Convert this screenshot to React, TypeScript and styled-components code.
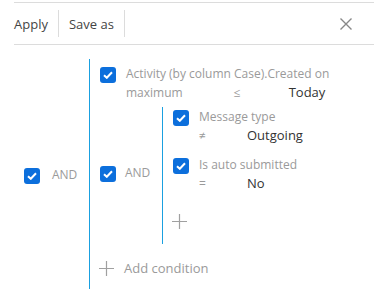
import styled, { createGlobalStyle } from 'styled-components';

const GlobalStyle = createGlobalStyle`
  body {
    margin: 0;
    background: #fff;
    font-family: 'Open Sans', 'Liberation Sans', sans-serif;
    font-size: 13px;
  }
`;

const Page = styled.div`
  padding: 2px 7px 0 14px;
`;

const Toolbar = styled.div`
  display: flex;
  align-items: center;
  height: 41px;
  border-top: 1px solid #dcdcdc;
  border-bottom: 1px solid #dcdcdc;
`;

const ToolButton = styled.button<{ $first?: boolean }>`
  height: 27px;
  padding: 0 10px 0 ${(p) => (p.$first ? '0' : '10px')};
  border: none;
  border-right: 1px solid #dcdcdc;
  background: transparent;
  font-family: inherit;
  font-size: 13px;
  color: #444;
  cursor: pointer;
`;

const CloseButton = styled.button`
  margin-left: auto;
  margin-right: 22px;
  padding: 0;
  border: none;
  background: transparent;
  display: flex;
  cursor: pointer;
`;

const Content = styled.div`
  padding-top: 14px;
`;

const Group = styled.div<{ $indent?: number }>`
  display: flex;
  align-items: center;
  padding-left: ${(p) => p.$indent || 0}px;
`;

const Connector = styled.div<{ $w: number; $gap: number; $lift?: number }>`
  width: ${(p) => p.$w}px;
  flex-shrink: 0;
  display: flex;
  align-items: center;
  gap: ${(p) => p.$gap}px;
  padding-bottom: ${(p) => p.$lift || 0}px;
`;

const AndLabel = styled.span`
  color: #9a9a9a;
  font-size: 12px;
`;

const Body = styled.div<{ $top: number; $bottom: number }>`
  display: flex;
  flex-direction: column;
  border-left: 1px solid #1aa0e0;
  padding: ${(p) => p.$top}px 0 ${(p) => p.$bottom}px 10px;
`;

const Condition = styled.div<{ $mb?: number }>`
  display: flex;
  align-items: flex-start;
  gap: 10px;
  margin-bottom: ${(p) => p.$mb || 0}px;
`;

const Box = styled.span`
  width: 16px;
  height: 16px;
  margin-top: 3px;
  flex-shrink: 0;
  border-radius: 3px;
  background: #0c6fdc;
  display: flex;
  align-items: center;
  justify-content: center;
`;

const Texts = styled.div`
  display: flex;
  flex-direction: column;
  line-height: 19px;
`;

const Title = styled.div`
  color: #9a9a9a;
  font-size: 12px;
  white-space: nowrap;
`;

const Detail = styled.div`
  display: flex;
  align-items: baseline;
  white-space: nowrap;
`;

const Prefix = styled.span`
  color: #9a9a9a;
  font-size: 12px;
  margin-right: 51px;
`;

const Operator = styled.span<{ $w: number }>`
  width: ${(p) => p.$w}px;
  color: #9a9a9a;
  font-size: 12px;
`;

const Value = styled.span`
  color: #333;
`;

const AddRow = styled.div<{ $h: number; $mt?: number }>`
  display: flex;
  align-items: center;
  gap: 10px;
  height: ${(p) => p.$h}px;
  margin: ${(p) => p.$mt || 0}px 0 0 -1px;
  color: #9a9a9a;
`;

const Check = () => (
  <Box>
    <svg width="10" height="8" viewBox="0 0 10 8">
      <path d="M1 4.2 L3.8 6.8 L9 1.2" fill="none" stroke="#fff" strokeWidth="2" />
    </svg>
  </Box>
);

const Plus = () => (
  <svg width="15" height="15" viewBox="0 0 15 15">
    <path d="M7.5 0 V15 M0 7.5 H15" stroke="#a0a0a0" strokeWidth="1.2" />
  </svg>
);

export default function App() {
  return (
    <Page>
      <GlobalStyle />
      <Toolbar>
        <ToolButton $first>Apply</ToolButton>
        <ToolButton>Save as</ToolButton>
        <CloseButton>
          <svg width="12" height="12" viewBox="0 0 12 12">
            <path d="M0.5 0.5 L11.5 11.5 M11.5 0.5 L0.5 11.5" stroke="#888" strokeWidth="1.4" />
          </svg>
        </CloseButton>
      </Toolbar>

      <Content>
        <Group $indent={10}>
          <Connector $w={65} $gap={12}>
            <Check />
            <AndLabel>AND</AndLabel>
          </Connector>
          <Body $top={5} $bottom={7}>
            <Condition $mb={5}>
              <Check />
              <Texts>
                <Title>Activity (by column Case).Created on</Title>
                <Detail>
                  <Prefix>maximum</Prefix>
                  <Operator $w={55}>≤</Operator>
                  <Value>Today</Value>
                </Detail>
              </Texts>
            </Condition>

            <Group>
              <Connector $w={62} $gap={9} $lift={6}>
                <Check />
                <AndLabel>AND</AndLabel>
              </Connector>
              <Body $top={0} $bottom={5}>
                <Condition $mb={10}>
                  <Check />
                  <Texts>
                    <Title>Message type</Title>
                    <Detail>
                      <Operator $w={48}>≠</Operator>
                      <Value>Outgoing</Value>
                    </Detail>
                  </Texts>
                </Condition>
                <Condition $mb={10}>
                  <Check />
                  <Texts>
                    <Title>Is auto submitted</Title>
                    <Detail>
                      <Operator $w={48}>=</Operator>
                      <Value>No</Value>
                    </Detail>
                  </Texts>
                </Condition>
                <AddRow $h={36}>
                  <Plus />
                </AddRow>
              </Body>
            </Group>

            <AddRow $h={28} $mt={10}>
              <Plus />
              <span>Add condition</span>
            </AddRow>
          </Body>
        </Group>
      </Content>
    </Page>
  );
}
